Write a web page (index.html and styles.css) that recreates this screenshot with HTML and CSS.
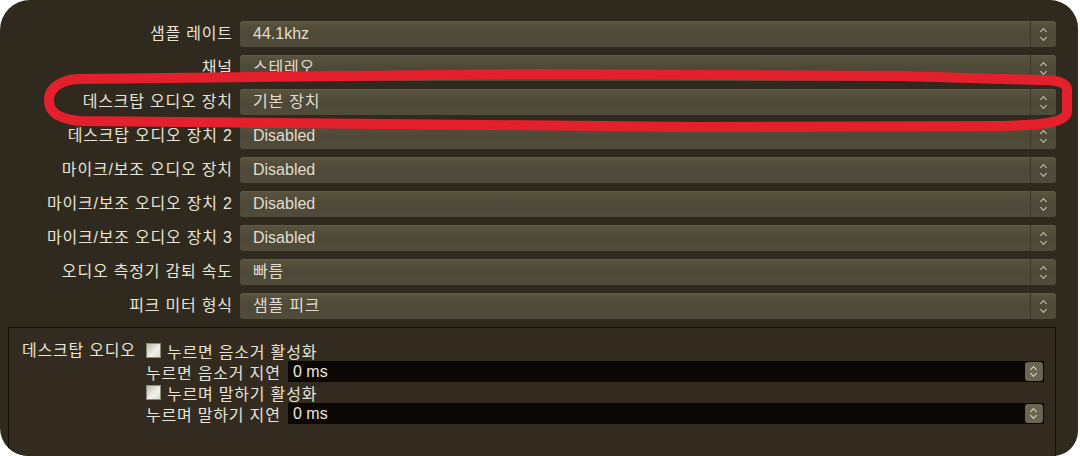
FILE: index.html
```html
<!DOCTYPE html>
<html lang="ko">
<head>
    <meta charset="UTF-8">
    <meta name="viewport" content="width=device-width, initial-scale=1.0">
    <title>오디오 설정</title>
    <link rel="stylesheet" href="styles.css">
</head>
<body>

    <div class="window">
        <!-- 장치 / 형식 선택 -->
        <div class="settings">
            <div class="field-label">샘플 레이트</div>
            <div class="combo"><span class="value latin">44.1khz</span><span class="spin"></span></div>

            <div class="field-label">채널</div>
            <div class="combo"><span class="value">스테레오</span><span class="spin"></span></div>

            <div class="field-label">데스크탑 오디오 장치</div>
            <div class="combo"><span class="value">기본 장치</span><span class="spin"></span></div>

            <div class="field-label">데스크탑 오디오 장치 2</div>
            <div class="combo"><span class="value latin">Disabled</span><span class="spin"></span></div>

            <div class="field-label">마이크/보조 오디오 장치</div>
            <div class="combo"><span class="value latin">Disabled</span><span class="spin"></span></div>

            <div class="field-label">마이크/보조 오디오 장치 2</div>
            <div class="combo"><span class="value latin">Disabled</span><span class="spin"></span></div>

            <div class="field-label">마이크/보조 오디오 장치 3</div>
            <div class="combo"><span class="value latin">Disabled</span><span class="spin"></span></div>

            <div class="field-label">오디오 측정기 감퇴 속도</div>
            <div class="combo"><span class="value">빠름</span><span class="spin"></span></div>

            <div class="field-label">피크 미터 형식</div>
            <div class="combo"><span class="value">샘플 피크</span><span class="spin"></span></div>
        </div>

        <!-- 단축키 그룹 -->
        <div class="group">
            <div class="group-label">데스크탑 오디오</div>
            <div class="group-body">
                <div class="row"><span class="check"></span>누르면 음소거 활성화</div>
                <div class="row">
                    <span class="row-label">누르면 음소거 지연</span>
                    <div class="number"><span class="value latin">0 ms</span><span class="spin-btn"></span></div>
                </div>
                <div class="row"><span class="check"></span>누르며 말하기 활성화</div>
                <div class="row">
                    <span class="row-label">누르며 말하기 지연</span>
                    <div class="number"><span class="value latin">0 ms</span><span class="spin-btn"></span></div>
                </div>
            </div>
        </div>

        <!-- 강조 표시 -->
        <svg class="markup" width="1078" height="456" viewBox="0 0 1078 456">
            <path d="M540 74 L78 79 C57 80 48 91 49 102 C50 113 59 119 80 121 L700 127 L1000 126 C1050 125 1066 121 1067 112 L1067 90 C1067 82 1056 80 1040 80 L900 76 Z"
                  fill="none" stroke="#e3202b" stroke-width="10" stroke-linejoin="round"/>
        </svg>
    </div>

</body>
</html>
```

FILE: styles.css
```css
/* 기본 스타일 */
body {
    margin: 0;
    padding: 0;
    background-color: #ffffff;
    font-family: "Liberation Sans", "Noto Sans CJK KR", sans-serif;
}

.window {
    position: relative;
    width: 1078px;
    height: 456px;
    background-color: #302a1e;
    border-radius: 30px 28px 25px 28px;
    overflow: hidden;
    color: #e8e4da;
    font-size: 16px;
    letter-spacing: 0.8px;
}

/* 영문 값은 자간 없이 */
.latin {
    letter-spacing: 0;
}

/* 설정 목록 */
.settings {
    display: grid;
    grid-template-columns: 232px 816px;
    column-gap: 8px;
    row-gap: 8px;
    padding-top: 21px;
}

.field-label {
    text-align: right;
    height: 26px;
    line-height: 26px;
    white-space: nowrap;
    margin-right: -0.8px;
}

.combo {
    display: flex;
    height: 26px;
    border-radius: 3px;
    background: linear-gradient(#59533f, #4d4837 55%, #504b3a);
    box-shadow: inset 0 1px 0 rgba(255, 255, 255, 0.05);
}

.combo .value {
    flex: 1;
    padding-left: 13px;
    line-height: 26px;
    color: #e2ddd0;
}

.spin {
    position: relative;
    width: 25px;
    border-left: 1px solid #3b3629;
}

.spin::before, .spin::after,
.spin-btn::before, .spin-btn::after {
    content: "";
    position: absolute;
    width: 4px;
    height: 4px;
    border-left: 1.5px solid #cbc5b2;
    border-top: 1.5px solid #cbc5b2;
}

.spin::before {
    left: 10px;
    top: 8px;
    transform: rotate(45deg);
}

.spin::after {
    left: 10px;
    bottom: 7px;
    transform: rotate(225deg);
}

/* 그룹 박스 */
.group {
    box-sizing: border-box;
    display: flex;
    width: 1048px;
    height: 140px;
    margin: 8px 0 0 8px;
    padding: 12px 11px 0 13px;
    border: 1px solid #17130c;
    background-color: #332b1f;
}

.group-label {
    width: 124px;
    line-height: 21px;
    white-space: nowrap;
}

.group-body {
    flex: 1;
    display: flex;
    flex-direction: column;
}

.row {
    display: flex;
    align-items: center;
    height: 21px;
    white-space: nowrap;
}

.check {
    box-sizing: border-box;
    width: 15px;
    height: 15px;
    margin-right: 6px;
    border: 1px solid #8d8878;
    background: linear-gradient(135deg, #bdb9ad, #f2f0ea 60%, #dedbd2);
}

.row-label {
    width: 142px;
}

.number {
    flex: 1;
    display: flex;
    align-items: center;
    height: 21px;
    background-color: #0b0704;
}

.number .value {
    flex: 1;
    padding-left: 5px;
    color: #ebe7de;
}

.spin-btn {
    position: relative;
    width: 18px;
    height: 19px;
    margin-right: 1px;
    border-radius: 3px;
    background-color: #6b6553;
}

.spin-btn::before {
    left: 6px;
    top: 5px;
    transform: rotate(45deg);
    border-color: #ddd8c8;
}

.spin-btn::after {
    left: 6px;
    bottom: 5px;
    transform: rotate(225deg);
    border-color: #ddd8c8;
}

/* 빨간 테두리 */
.markup {
    position: absolute;
    top: 0;
    left: 0;
    pointer-events: none;
    filter: blur(0.6px);
}
```
